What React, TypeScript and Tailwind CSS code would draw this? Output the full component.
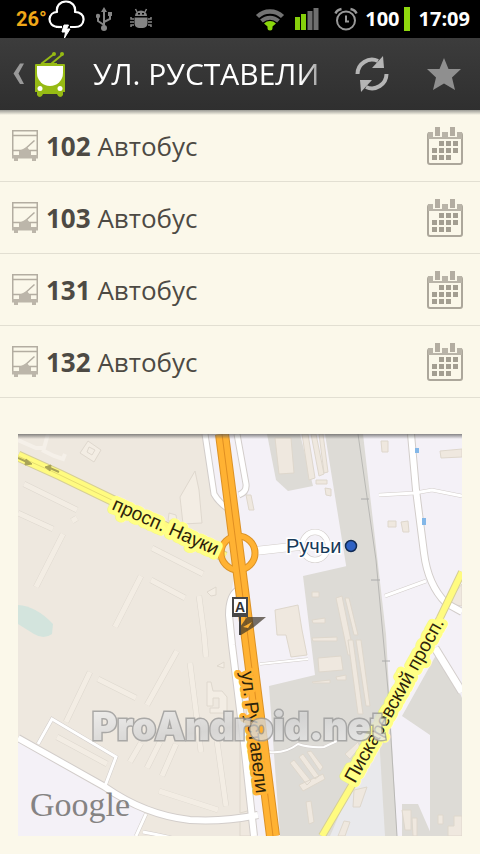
const routes = [
  { number: '102', kind: 'Автобус' },
  { number: '103', kind: 'Автобус' },
  { number: '131', kind: 'Автобус' },
  { number: '132', kind: 'Автобус' },
];

function StatusBar() {
  return (
    <div className="flex h-[38px] items-center justify-between bg-black pr-[10px] pl-4 text-white">
      <div className="flex items-center">
        <span className="w-8 font-[Roboto,sans-serif] text-xl leading-8 font-bold text-[#f0a818]">26°</span>
        {/* storm cloud */}
        <svg className="h-[38px] w-[37px]" viewBox="0 0 37 38" fill="none" stroke="#fff" strokeWidth="2.2" strokeLinejoin="round">
          <path d="M11 27C4 27 1.500 23 1.500 19C2 15 5 12 9 12C8 6 12 1.500 18 1.500C24 1.500 28 6 27 12C32 12 36 15 35.500 20C35 25 32 27 27 27H22" />
          <path d="M10 27H14" />
          <path d="M16 25H20.500L18.500 29H22L16.500 38L17.500 32H14L16 25Z" fill="#fff" strokeWidth="1" />
        </svg>
        {/* usb */}
        <svg className="ml-[11px] h-6 w-4" viewBox="0 0 16 24" fill="none" stroke="#858585" strokeWidth="2">
          <path d="M8 4V20M8 18L2 14V9M8 15L14 12V7" />
          <path d="M8 0L11 5H5ZM12 5H16V9H12Z" fill="#858585" stroke="none" />
          <circle cx="2" cy="9" r="2.200" fill="#858585" stroke="none" />
          <circle cx="8" cy="21" r="3" fill="#858585" stroke="none" />
        </svg>
        {/* debug bug */}
        <svg className="ml-[18px] h-6 w-[22px]" viewBox="0 0 22 24" fill="#858585">
          <path d="M5 9A6 5.500 0 0 1 17 9Z" />
          <path d="M4.500 10.500H17.500V16A5 5 0 0 1 13 21H9A5 5 0 0 1 4.500 16Z" />
          <path
            d="M7 5L5.500 2M15 5L16.500 2M4 12H1V10M4 15H0M4 18H1V20M18 12H21V10M18 15H22M18 18H21V20"
            stroke="#858585"
            strokeWidth="1.500"
            fill="none"
          />
          <path d="M8 6H10V7.500H8ZM12 6H14V7.500H12Z" fill="#000" />
        </svg>
      </div>

      <div className="flex items-center">
        {/* wifi */}
        <svg className="h-6 w-[30px]" viewBox="0 0 30 24" fill="none">
          <path d="M2.500 9.500A18 18 0 0 1 27.500 9.500" stroke="#737373" strokeWidth="4.500" />
          <path d="M6.500 14A12.500 12.500 0 0 1 23.500 14" stroke="#737373" strokeWidth="4" />
          <path d="M9 16.500A8.500 8.500 0 0 1 21 16.500L17.500 19.500V21A2.500 2.500 0 0 1 12.500 21V19.500Z" fill="#8ad60c" />
        </svg>
        <svg className="ml-[10px] h-[22px] w-6" viewBox="0 0 24 22">
          <path d="M0 9H5V22H0ZM6 6H11V22H6Z" fill="#86cf0b" />
          <path d="M12.500 3H17.500V22H12.500ZM18.500 0H23.500V22H18.500Z" fill="#6f6f6f" />
        </svg>
        {/* alarm */}
        <svg className="ml-[15px] h-6 w-6" viewBox="0 0 24 24" fill="none" stroke="#999" strokeWidth="2">
          <circle cx="12" cy="13.500" r="9" />
          <path d="M12 8.500V14.500H15" />
          <path d="M1.500 6.500C2.500 4 4.500 2.500 7.500 2M22.500 6.500C21.500 4 19.500 2.500 16.500 2" strokeWidth="2.500" />
        </svg>
        <span className="ml-[7px] text-xl font-bold">100</span>
        <span className="ml-1 h-6 w-[6px] bg-[#8fd80e]" />
        <span className="ml-[9px] text-xl font-bold">17:09</span>
      </div>
    </div>
  );
}

function Header() {
  return (
    <header className="flex h-[72px] items-center bg-linear-to-b from-[#3c3c3c] to-[#2f2f2f] text-white">
      <a href="#back" aria-label="Назад" className="flex items-center pl-[13px]">
        <svg className="h-6 w-[11px]" viewBox="0 0 11 24" fill="#999">
          <path d="M7 1.500H11L5.500 11.500L11 22H7L0.500 11.500Z" />
        </svg>
        {/* trolleybus logo */}
        <svg className="ml-[10px] h-[45px] w-8" viewBox="0 0 32 45">
          <path d="M7 12L20 2M17 12L29 2M7 12H23" stroke="#96ba14" strokeWidth="2" fill="none" />
          <circle cx="20" cy="2" r="2" fill="#96ba14" />
          <circle cx="28" cy="2" r="2" fill="#96ba14" />
          <path d="M1 13Q1 12 2 12H30Q31 12 31 13V40H29V43Q28 45 26 45Q24 45 23 42H9Q8 45 6 45Q4 45 3 43V40H1Z" fill="#96ba14" />
          <path d="M3 14H29V21A13 13 0 0 1 3 21Z" fill="#fff" />
          <circle cx="6" cy="36.500" r="2.500" fill="#fff" />
          <circle cx="26" cy="36.500" r="2.500" fill="#fff" />
        </svg>
      </a>
      <h1 className="mr-3 ml-[27px] min-w-0 flex-1 overflow-hidden text-[30px] leading-10 whitespace-nowrap [mask-image:linear-gradient(to_right,black_90%,#0006)]">
        УЛ. РУСТАВЕЛИ
      </h1>
      <button type="button" aria-label="Обновить" className="flex h-full w-[72px] items-center justify-center">
        <svg className="h-9 w-[34px]" viewBox="0 0 34 36">
          <path d="M2.500 18A14.500 14.500 0 0 1 23 5" fill="none" stroke="#b5b5b5" strokeWidth="4" />
          <path d="M28 0L29 12H17Z" fill="#b5b5b5" />
          <path d="M31.500 18A14.500 14.500 0 0 1 11 31" fill="none" stroke="#b5b5b5" strokeWidth="4" />
          <path d="M6 36L5 24H17Z" fill="#b5b5b5" />
        </svg>
      </button>
      <button type="button" aria-label="В избранное" className="flex h-full w-[72px] items-center justify-center">
        <svg className="h-8 w-[34px]" viewBox="0 0 34 32">
          <path d="M17 0L21.500 11H34L25 19.500L28 32L17 25.500L6 32L9 19.500L0 11H12.500Z" fill="#8f8f8f" />
        </svg>
      </button>
    </header>
  );
}

function BusIcon() {
  return (
    <svg className="h-8 w-[26px] shrink-0" viewBox="0 0 26 32" fill="none" stroke="#b3ada1" strokeWidth="1.500">
      <path d="M0.750 28V0.750H25.250V28M1 5.500H25M1 20.500H25" />
      <path d="M12 20L22.500 10.500" />
      <path d="M7 21L11 19L15 17L18 21V25H26V28.500H24V31H20V28.500H6V31H2V28.500H0V25H7Z" fill="#bcb6aa" stroke="none" />
      <path d="M7 21H19V25H7Z" fill="#bcb6aa" stroke="none" />
    </svg>
  );
}

function CalendarIcon() {
  return (
    <svg className="h-[38px] w-9" viewBox="0 0 36 38">
      <rect x="1" y="6" width="34" height="31" rx="2" fill="#fbf8ea" stroke="#aca79b" strokeWidth="2" />
      <path d="M1 5H35V12H1Z" fill="#b9b4a8" />
      <path d="M6 2H15V10H6ZM21 2H30V10H21Z" fill="#fbf8ea" />
      <path d="M8 0H13V9H8ZM23 0H28V9H23Z" fill="#b3ada1" />
      <path
        d="M12 14h5v5h-5zM19 14h5v5h-5zM26 14h5v5h-5zM5 21h5v5h-5zM12 21h5v5h-5zM19 21h5v5h-5zM26 21h5v5h-5zM5 28h5v5h-5zM12 28h5v5h-5zM19 28h5v5h-5z"
        fill="#a39e91"
      />
    </svg>
  );
}

function StopMap() {
  return (
    <svg
      viewBox="18 434 444 402"
      className="block w-full font-['Liberation_Sans',Arial,sans-serif]"
      role="img"
      aria-label="Карта остановки"
    >
      <defs>
        <linearGradient id="chrome" x1="0" y1="0" x2="1" y2="1">
          <stop offset="0" stopColor="#f4f4f4" />
          <stop offset="0.500" stopColor="#d2d2d2" />
          <stop offset="1" stopColor="#efefef" />
        </linearGradient>
        <linearGradient id="shade" x1="0" y1="0" x2="0" y2="1">
          <stop offset="0" stopColor="#555" stopOpacity="0.700" />
          <stop offset="1" stopColor="#555" stopOpacity="0" />
        </linearGradient>
      </defs>

      {/* land */}
      <path d="M18 434H462V836H18Z" fill="#f4f1f7" />
      <path d="M18 434H206L215 495L230 512L238 555L230 600V634L238 711L255 836H18Z" fill="#eee8df" />
      <path d="M18 738L110 790L146 814L136 836H18Z" fill="#f4f1f7" />
      <path d="M18 605Q36 606 53 624L52 634Q44 640 34 634L18 624Z" fill="#d3e4dd" />

      {/* industrial and railway ground */}
      <g fill="#dddbd6">
        <path d="M267 434H300L313 486L288 491L276 480Z" />
        <path d="M325 434H363L386 634L397 836H379L367 690L350 590Z" />
        <path d="M303 576L347 566L358 634L381 770L380 790L346 836H280L269 686L315 675Z" />
        <path d="M440 648L462 698V836H430V735L402 716Z" />
        <path d="M402 804L418 804L432 836H402Z" />
      </g>
      <path d="M350 790L379 736L385 836H330Z" fill="#e9e9ec" />
      <path d="M358 434L376 560L388 690L397 836" stroke="#b9b8b5" fill="none" />
      <path d="M361 499H369M371 580H380M382 661H390" stroke="#aaa" />

      {/* building blocks, east side */}
      <g fill="#efe8df" stroke="#ded7cc" strokeWidth="1">
        <path d="M275 438H291L294 473L279 474ZM302 434H308L315 478L309 480ZM311 434H316L324 474L319 476ZM319 434H323L328 472L324 473Z" />
        <path d="M316 480H327V484H316ZM325 488L331 489V496L326 495ZM246 495H251L254 510H249Z" />
        <path d="M381 441H388V452H382ZM440 451L462 449V457L441 458ZM388 521H396V527H388ZM401 522L408 521L409 532H403Z" />
        <path d="M275 610L298 605L302 630L307 655L291 657L286 635L277 635Z" />
        <path d="M312 592H319V597H312ZM336 598L342 596L354 655L348 655ZM345 598H349L358 635H354ZM312 620L325 618V623H313ZM312 638L337 637V641H313ZM318 658L341 656L343 670L319 672Z" />
        <path d="M312 682L330 680V683H313ZM336 677L346 675V680H337ZM348 640L353 640L363 714L358 714ZM356 640L361 640L370 706L366 706Z" />
        <path d="M290 763L294 760L311 781L307 785ZM299 757L303 754L319 776L315 779ZM307 752L311 751L323 767L320 771ZM299 785L323 774L325 779L303 791ZM306 802L311 801L314 822L309 824ZM345 754L358 742L360 747L350 759Z" />
        <path d="M354 790L367 787L360 807H353ZM344 821L350 822L345 836H338ZM402 810H411V830H405ZM412 818H417V836H413ZM438 815H443V824H438ZM454 816H462V836H448V826H454Z" />
        <path d="M240 705H246L251 810L240 813ZM240 820H250L252 836H240ZM454 594L462 584V606L450 604Z" />
      </g>

      {/* building blocks, west side */}
      <g stroke="#ddd7ce" strokeWidth="6" fill="none">
        <path d="M24 484L77 510M18 513L53 529M63 534L36 587M152 548L203 574M151 580L185 598M141 576L115 627M199 596L204 634L206 657M98 679L136 698M177 651L147 705M90 672L66 722M57 737L107 764M190 663L201 752M141 743L130 762M160 742L147 768M176 744L162 776M217 741L226 806M159 791L218 810M72 521L77 518" />
      </g>
      <g stroke="#f3ede4" strokeWidth="5" fill="none">
        <path d="M24 484L77 510M18 513L53 529M63 534L36 587M152 548L203 574M151 580L185 598M141 576L115 627M199 596L204 634L206 657M98 679L136 698M177 651L147 705M90 672L66 722M57 737L107 764M190 663L201 752M141 743L130 762M160 742L147 768M176 744L162 776M217 741L226 806M159 791L218 810M72 521L77 518" />
      </g>
      <g fill="#f3ede4" stroke="#dfd8ce">
        <path d="M88 441L101 450L94 462L80 453Z" />
        <path d="M89 447L95 450L92 455L87 452Z" />
        <path d="M195 471L199 490L202 523L183 524L180 497ZM169 513L176 515L177 521L168 521Z" />
        <path d="M207 592L216 587V595L211 596ZM217 666L224 662V668ZM207 682H211L213 691H222L227 697V713H210V708H219V698H213V706H207Z" />
      </g>
      <path d="M18 440L36 448H44L48 434M42 450L54 456L63 459L65 454" stroke="#f5f0e9" strokeWidth="4" fill="none" />

      {/* minor white roads */}
      <g fill="none" stroke="#d2cdca" strokeWidth="6">
        <path d="M411 434L416 490L424 553Q428 585 446 603L462 612" strokeWidth="8" />
        <path d="M379 495L415 493L432 490L462 496M426 581L385 596" strokeWidth="4" />
        <path d="M255 551L300 546" strokeWidth="9" />
        <ellipse cx="315" cy="546" rx="13" ry="14" strokeWidth="6" />
        <path d="M435 648L462 692" strokeWidth="9" />
        <path d="M260 664L308 659M269 752Q285 754 298 744Q310 748 324 747L337 741" strokeWidth="3" />
        <path d="M205 434L214 494Q219 503 230 510M237 434L246 484Q247 492 239 495" strokeWidth="7" />
        <path d="M238 590Q229 596 229 615L232 645L243 734L254 836" strokeWidth="8" />
        <path d="M18 738L105 787Q145 815 190 820Q225 822 258 815" strokeWidth="8" />
        <path d="M38 744L52 719L116 757L105 786M146 814L136 836M143 832Q165 836 180 840" strokeWidth="4" />
      </g>
      <g fill="none" stroke="#fff" strokeWidth="4">
        <path d="M411 434L416 490L424 553Q428 585 446 603L462 612" strokeWidth="6" />
        <path d="M379 495L415 493L432 490L462 496M426 581L385 596" strokeWidth="3" />
        <path d="M255 551L300 546" strokeWidth="8" />
        <ellipse cx="315" cy="546" rx="13" ry="14" strokeWidth="5" />
        <path d="M435 648L462 692" strokeWidth="7" />
        <path d="M260 664L308 659M269 752Q285 754 298 744Q310 748 324 747L337 741" strokeWidth="2" />
        <path d="M205 434L214 494Q219 503 230 510M237 434L246 484Q247 492 239 495" strokeWidth="5" />
        <path d="M238 590Q229 596 229 615L232 645L243 734L254 836" strokeWidth="6" />
        <path d="M18 738L105 787Q145 815 190 820Q225 822 258 815" strokeWidth="6" />
        <path d="M38 744L52 719L116 757L105 786M146 814L136 836M143 832Q165 836 180 840" strokeWidth="3" />
      </g>

      {/* yellow avenues */}
      <path d="M18 456L60 475L118 503L225 557" stroke="#d6cf96" strokeWidth="11" fill="none" />
      <path d="M18 456L60 475L118 503L225 557" stroke="#fffb80" strokeWidth="9" fill="none" />
      <path d="M18 456L60 475L118 503" stroke="#e6dd70" fill="none" />
      <path d="M462 572L440 618L355 780L322 836" stroke="#d6cf96" strokeWidth="8" fill="none" />
      <path d="M462 572L440 618L355 780L322 836" stroke="#fffb80" strokeWidth="6" fill="none" />
      <g stroke="#a9a457" strokeWidth="2" fill="#a9a457">
        <path d="M18 458L27 462" />
        <path d="M26 459L32 464L25 465Z" strokeWidth="1" />
        <path d="M59 472L50 468" />
        <path d="M51 465L45 467L50 471Z" strokeWidth="1" />
      </g>

      {/* orange highway */}
      <g fill="none">
        <circle cx="238" cy="553" r="17" stroke="#dc9226" strokeWidth="7" />
        <path d="M222 434L242 590L273 836" stroke="#dc9226" strokeWidth="14" />
        <circle cx="238" cy="553" r="17" stroke="#ffb233" strokeWidth="5" />
        <path d="M222 434L242 590L273 836" stroke="#ffb233" strokeWidth="12" />
        <path d="M222 434L242 590L273 836" stroke="#e08f22" strokeWidth="1" />
      </g>

      {/* street names */}
      <g fontSize="19" fill="#2d230b" strokeLinejoin="round" style={{ paintOrder: 'stroke' }}>
        <text transform="translate(111 509) rotate(24)" stroke="#ffff85" strokeWidth="9">
          просп. Науки
        </text>
        <text transform="translate(241 672) rotate(83)" stroke="#ffb233" strokeWidth="6">
          ул. Руставели
        </text>
        <text transform="translate(355 784) rotate(-61)" stroke="#ffff85" strokeWidth="9">
          Пискаревский просп.
        </text>
      </g>
      <text x="286" y="553" fontSize="20" fill="#173a59" stroke="#fff" strokeWidth="3" style={{ paintOrder: 'stroke' }}>
        Ручьи
      </text>
      <circle cx="351" cy="546" r="5.500" fill="#2f62c4" stroke="#122c55" strokeWidth="1.500" />
      <path d="M415 448H419V453H415ZM422 518H426V525H422Z" fill="#83b7e8" />

      {/* stop marker */}
      <path d="M241 635L240 627L247 617H266L254 627Z" fill="#3d3528" fillOpacity="0.700" />
      <path d="M243 627L252 622L248 628Z" fill="#ffb233" />
      <path d="M240 615V635" stroke="#444" strokeWidth="2" />
      <rect x="233" y="598" width="14" height="18" fill="#fff" stroke="#484848" strokeWidth="2" />
      <path d="M232 613H248V617H232Z" fill="#484848" />
      <text x="240" y="612" fontSize="14" fontWeight="700" textAnchor="middle" fill="#333">
        A
      </text>

      <text x="30" y="816" fontSize="34" fill="#858383" className="font-['Liberation_Serif',serif]">
        Google
      </text>
      <text
        x="92"
        y="740"
        fontSize="38"
        fontWeight="900"
        fill="url(#chrome)"
        stroke="#999"
        strokeWidth="3"
        opacity="0.800"
        className="font-['Inter',sans-serif]"
        style={{ paintOrder: 'stroke' }}
      >
        ProAndroid.net
      </text>
      <path d="M18 434H462V439H18Z" fill="url(#shade)" />
    </svg>
  );
}

export default function App() {
  return (
    <div className="min-h-screen bg-[#fbf8ea] font-['Open_Sans','Noto_Sans',sans-serif]">
      <StatusBar />
      <Header />
      <main>
        <ul className="bg-linear-to-b from-[#9a9a94] to-transparent bg-[length:100%_5px] bg-no-repeat">
          {routes.map(route => (
            <li key={route.number} className="flex h-[72px] items-center border-b border-[#e2dfd2] pr-[17px] pl-3">
              <a href={`#route-${route.number}`} className="flex flex-1 items-center gap-2 text-[26px] leading-9 text-[#4d4a44]">
                <BusIcon />
                <span>
                  <b className="font-bold">{route.number}</b> {route.kind}
                </span>
              </a>
              <button type="button" aria-label={`Расписание ${route.number}`}>
                <CalendarIcon />
              </button>
            </li>
          ))}
        </ul>
        <div className="px-[18px] pt-9 pb-[18px]">
          <StopMap />
        </div>
      </main>
    </div>
  );
}
